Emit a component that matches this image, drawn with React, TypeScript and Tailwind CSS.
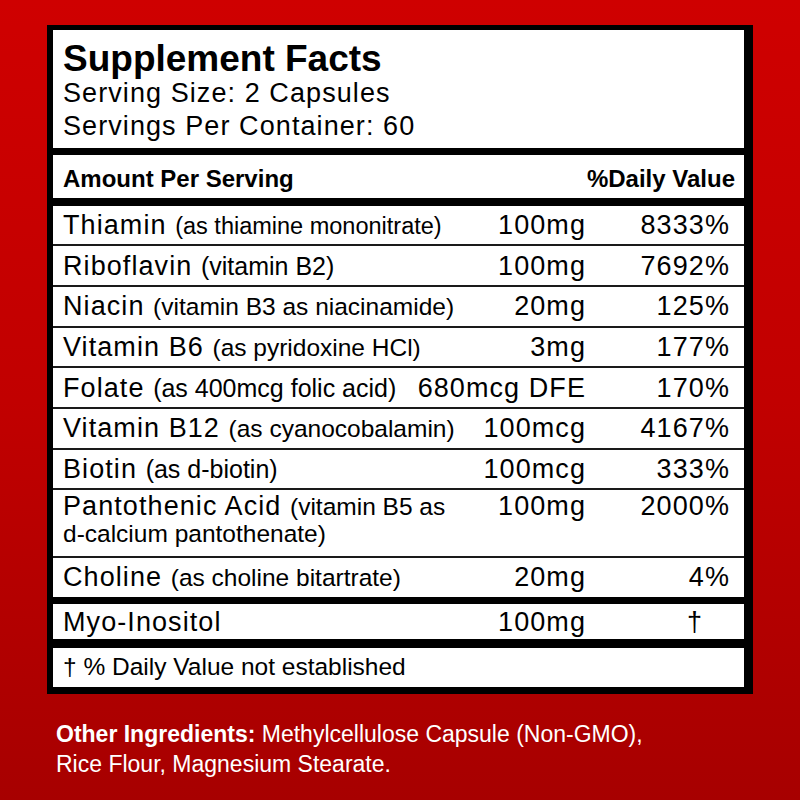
type Nutrient = {
  name: string;
  note?: React.ReactNode;
  amt: string;
  dv: string;
  rowCls: string;
  noteCls?: string;
  dvCls?: string;
  tall?: boolean;
};

const nutrients: Nutrient[] = [
  { name: "Thiamin", note: "(as thiamine mononitrate)", amt: "100mg", dv: "8333%", rowCls: "h-[46.3px] border-t-[8px] border-black", noteCls: "text-[23.5px]" },
  { name: "Riboflavin", note: "(vitamin B2)", amt: "100mg", dv: "7692%", rowCls: "h-[40.7px] border-t-2 border-[#1a1a1a]", noteCls: "text-[25px]" },
  { name: "Niacin", note: "(vitamin B3 as niacinamide)", amt: "20mg", dv: "125%", rowCls: "h-[40.7px] border-t-2 border-[#1a1a1a]" },
  { name: "Vitamin B6", note: "(as pyridoxine HCl)", amt: "3mg", dv: "177%", rowCls: "h-[40.7px] border-t-2 border-[#1a1a1a]" },
  { name: "Folate", note: "(as 400mcg folic acid)", amt: "680mcg DFE", dv: "170%", rowCls: "h-[40.7px] border-t-2 border-[#1a1a1a]", noteCls: "text-[25px]" },
  { name: "Vitamin B12", note: "(as cyanocobalamin)", amt: "100mcg", dv: "4167%", rowCls: "h-[40.7px] border-t-2 border-[#1a1a1a]" },
  { name: "Biotin", note: "(as d-biotin)", amt: "100mcg", dv: "333%", rowCls: "h-[40.7px] border-t-2 border-[#1a1a1a]", noteCls: "text-[25px]" },
  {
    name: "Pantothenic Acid",
    note: (
      <>
        (vitamin B5 as <span className="whitespace-nowrap">d-calcium</span> pantothenate)
      </>
    ),
    amt: "100mg",
    dv: "2000%",
    rowCls: "h-[67.6px] border-t-2 border-[#1a1a1a]",
    tall: true,
  },
  { name: "Choline", note: "(as choline bitartrate)", amt: "20mg", dv: "4%", rowCls: "h-[40.7px] border-t-2 border-[#1a1a1a]" },
  { name: "Myo-Inositol", amt: "100mg", dv: "†", rowCls: "h-[42.6px] border-t-[7px] border-black", dvCls: "pr-[27px]" },
];

function Row({ n }: { n: Nutrient }) {
  return (
    <div
      className={`flex pl-[10px] pr-[14px] text-[27px] ${n.rowCls} ${
        n.tall ? "items-start pt-[3px] leading-[27px]" : "items-center leading-[30px]"
      }`}
    >
      <div className="flex-1 min-w-0">
        <span className="tracking-[0.04em]">{n.name} </span>
        {n.note && <span className={n.noteCls ?? "text-[24.5px]"}>{n.note}</span>}
      </div>
      <div className="shrink-0 whitespace-nowrap text-right tracking-[0.04em]">{n.amt}</div>
      <div className={`w-[144px] shrink-0 text-right tracking-[0.04em] ${n.dvCls ?? ""}`}>{n.dv}</div>
    </div>
  );
}

export default function App() {
  return (
    <div className="w-[800px] h-[800px] overflow-hidden pt-[25px] bg-linear-to-b from-[#cf0000] via-[#c10000] to-[#a70000] font-['Liberation_Sans',Arial,sans-serif]">
      <div className="ml-[47px] w-[706px] bg-white text-black border-t-[5px] border-l-[6px] border-r-[9px] border-b-[7px] border-black">
        <div className="h-[118px] pl-[10px] pt-[10px]">
          <h1 className="text-[37px] leading-[37px] font-bold">Supplement Facts</h1>
          <p className="text-[27px] leading-[33px] tracking-[0.04em]">Serving Size: 2 Capsules</p>
          <p className="text-[27px] leading-[33px] tracking-[0.04em]">Servings Per Container: 60</p>
        </div>

        <div className="h-[50px] border-t-[7px] border-black flex items-start justify-between pl-[10px] pr-[9px] pt-[12px] text-[24px] leading-[24px] font-bold">
          <span>Amount Per Serving</span>
          <span>%Daily Value</span>
        </div>

        {nutrients.map((n) => (
          <Row key={n.name} n={n} />
        ))}

        <div className="h-[47.4px] border-t-[9px] border-black flex items-center pl-[10px] text-[24.5px] leading-[30px]">
          † % Daily Value not established
        </div>
      </div>

      <p className="ml-[56px] mt-[25px] text-white text-[23px] leading-[30px]">
        <span className="font-bold">Other Ingredients:</span> Methylcellulose Capsule (Non-GMO),
        <br />
        Rice Flour, Magnesium Stearate.
      </p>
    </div>
  );
}
